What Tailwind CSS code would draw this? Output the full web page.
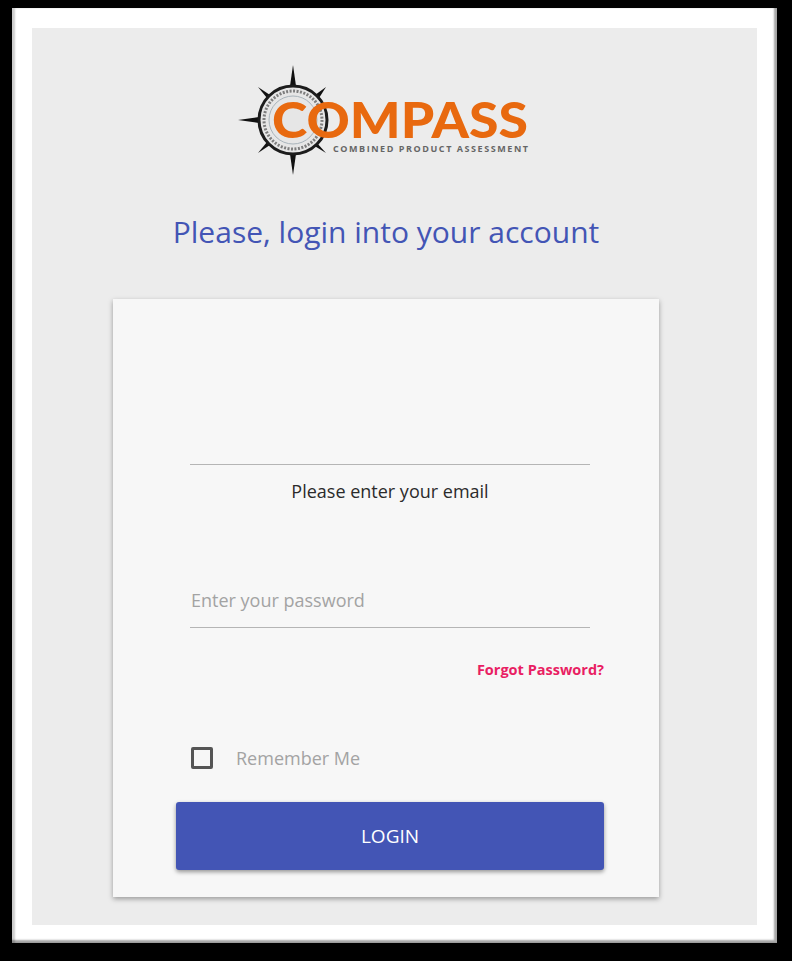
<!DOCTYPE html>
<html lang="en">
<head>
  <meta charset="UTF-8" />
  <meta name="viewport" content="width=device-width, initial-scale=1.0" />
  <title>Compass Login</title>
  <script src="https://cdn.jsdelivr.net/npm/@tailwindcss/browser@4"></script>
</head>
<body class="bg-black h-[961px] overflow-hidden font-['Open_Sans',sans-serif]">
  <!-- white frame -->
  <div class="ml-[12px] pt-[8px] w-[765px]">
    <div class="bg-white h-[935px] pt-[20px] pl-[20px] shadow-[inset_-3px_-3px_2px_rgba(0,0,0,0.35),inset_3px_0_2px_rgba(0,0,0,0.2)]">
      <div class="bg-[#ececec] w-[725px] h-[897px] pl-[81px]">
        <div class="w-[546px] flex flex-col">
          <!-- logo -->
          <div class="pt-[37px] flex justify-center">
            <svg width="300" height="112" viewBox="0 0 300 112">
              <g fill="#111">
                <path d="M57 0 L60 21 L54 21 Z" />
                <path d="M57 110 L60 89 L54 89 Z" />
                <path d="M2 55 L23 52 L23 58 Z" />
                <path d="M22 22 L34 30 L31 33 Z" />
                <path d="M90 22 L79 30 L83 33 Z" />
                <path d="M22 88 L31 77 L34 80 Z" />
                <path d="M90 88 L80 77 L77 80 Z" />
              </g>
              <circle cx="57" cy="55" r="34" fill="#e6e6e6" stroke="#1c1c1c" stroke-width="3" />
              <circle cx="57" cy="55" r="29" fill="none" stroke="#7d7d7d" stroke-width="3" stroke-dasharray="2 1.5" />
              <circle cx="57" cy="55" r="24" fill="none" stroke="#a9b4bb" stroke-width="1" />
              <text x="36" y="73" textLength="256" lengthAdjust="spacingAndGlyphs" font-family="Lato, sans-serif" font-weight="900" font-size="50" fill="#e8690f">COMPASS</text>
              <text x="97" y="87" textLength="195" lengthAdjust="spacing" font-family="'Open Sans', sans-serif" font-weight="700" font-size="9" fill="#666666">COMBINED PRODUCT ASSESSMENT</text>
            </svg>
          </div>
          <h1 class="mt-[33px] h-[44px] leading-[44px] text-center text-[30px] text-[#4355b5]">Please, login into your account</h1>

          <!-- card -->
          <div class="mt-[45px] h-[598px] bg-[#f7f7f7] shadow-[0_2px_5px_rgba(0,0,0,0.35)] pl-[63px] pr-[55px] pt-[131px] flex flex-col">
            <div class="px-[14px]">
              <input type="email" class="w-[400px] h-[35px] block border-b border-[#b5b5b5] outline-none bg-transparent" />
              <p class="mt-[14px] h-[24px] leading-[24px] text-center text-[18px] text-[#2b2b2b]">Please enter your email</p>
              <input type="password" placeholder="Enter your password" class="mt-[69px] w-[400px] h-[56px] pl-[1px] block border-b border-[#b5b5b5] outline-none bg-transparent text-[18px] placeholder:text-[#a3a3a3]" />
            </div>
            <a href="#" class="mt-[32px] h-[20px] leading-[20px] text-right text-[14.5px] font-bold text-[#e91e63]">Forgot Password?</a>
            <label class="mt-[67px] pl-[15px] h-[22px] flex items-center gap-[23px]">
              <span class="w-[22px] h-[22px] border-[3px] border-[#555] rounded-[2px]"></span>
              <span class="text-[18px] text-[#a3a3a3]">Remember Me</span>
            </label>
            <button class="mt-[33px] h-[68px] bg-[#4355b5] rounded-[3px] shadow-[0_2px_4px_rgba(0,0,0,0.4)] text-white text-[19px]">LOGIN</button>
          </div>
        </div>
      </div>
    </div>
  </div>
</body>
</html>
